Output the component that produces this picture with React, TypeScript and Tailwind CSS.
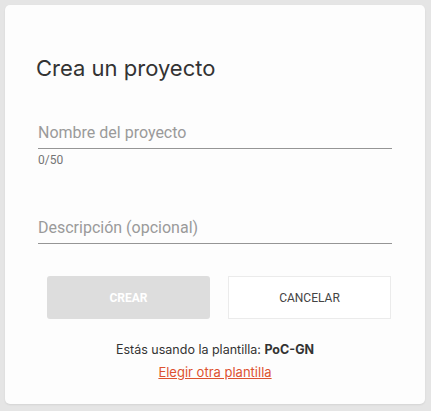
export default function App() {
  return (
    <div className="min-h-[411px] w-full bg-[#e5e5e5] p-[5px] pr-[6px] font-['Inter','Roboto',sans-serif]">
      <div className="flex h-[399px] flex-col rounded-[5px] bg-[#fdfdfd] shadow-[0_1px_2px_rgba(0,0,0,0.08)]">
        <h1 className="ml-[31px] mt-[49px] text-[22px] leading-[28px] font-normal text-[#333]">
          Crea un proyecto
        </h1>

        <div className="mx-[33px] mt-[41px] font-['Roboto',sans-serif]">
          <div className="border-b border-[#959595] pb-[5px] text-[16px] leading-[20px] text-[#9a9a9a]">
            Nombre del proyecto
          </div>
          <div className="mt-[4px] text-[12px] leading-[14px] text-[#757575]">0/50</div>
        </div>

        <div className="mx-[33px] mt-[51px] font-['Roboto',sans-serif]">
          <div className="border-b border-[#959595] pb-[5px] text-[16px] leading-[20px] text-[#9a9a9a]">
            Descripción (opcional)
          </div>
        </div>

        <div className="ml-[42px] mt-[32px] flex gap-[18px] font-['Roboto',sans-serif]">
          <button className="h-[43px] w-[163px] rounded-[3px] bg-[#dddddd] text-[12px] font-bold text-white">
            CREAR
          </button>
          <button className="h-[43px] w-[163px] border border-[#ebebeb] bg-white text-[12px] text-[#444]">
            CANCELAR
          </button>
        </div>

        <p className="mt-[23px] text-center text-[12.5px] leading-[16px] text-[#333]">
          Estás usando la plantilla: <span className="font-bold">PoC-GN</span>
        </p>
        <a className="mx-auto mt-[6px] text-center text-[13px] leading-[16px] text-[#dd5230] underline">
          Elegir otra plantilla
        </a>
      </div>
    </div>
  );
}
